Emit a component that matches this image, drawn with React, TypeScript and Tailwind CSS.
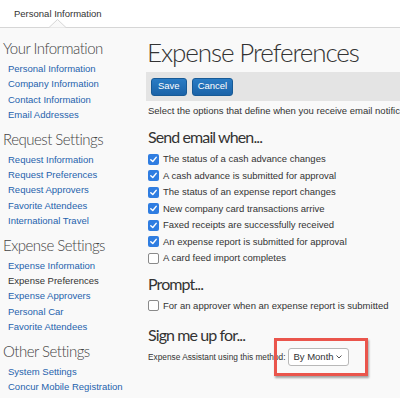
import React from 'react';

const sections: { title: string; links: { label: string; active?: boolean }[] }[] = [
  {
    title: 'Your Information',
    links: [
      { label: 'Personal Information' },
      { label: 'Company Information' },
      { label: 'Contact Information' },
      { label: 'Email Addresses' },
    ],
  },
  {
    title: 'Request Settings',
    links: [
      { label: 'Request Information' },
      { label: 'Request Preferences' },
      { label: 'Request Approvers' },
      { label: 'Favorite Attendees' },
      { label: 'International Travel' },
    ],
  },
  {
    title: 'Expense Settings',
    links: [
      { label: 'Expense Information' },
      { label: 'Expense Preferences', active: true },
      { label: 'Expense Approvers' },
      { label: 'Personal Car' },
      { label: 'Favorite Attendees' },
    ],
  },
  {
    title: 'Other Settings',
    links: [{ label: 'System Settings' }, { label: 'Concur Mobile Registration' }],
  },
];

const emailOptions: { label: string; checked: boolean }[] = [
  { label: 'The status of a cash advance changes', checked: true },
  { label: 'A cash advance is submitted for approval', checked: true },
  { label: 'The status of an expense report changes', checked: true },
  { label: 'New company card transactions arrive', checked: true },
  { label: 'Faxed receipts are successfully received', checked: true },
  { label: 'An expense report is submitted for approval', checked: true },
  { label: 'A card feed import completes', checked: false },
];

const headFont = { fontFamily: '"Lato", "Liberation Sans", sans-serif' };

const Check = ({ checked }: { checked: boolean }) =>
  checked ? (
    <span className="flex h-[11px] w-[11px] shrink-0 items-center justify-center rounded-[2px] bg-[#2f7de1]">
      <svg viewBox="0 0 10 10" className="h-[9px] w-[9px]">
        <path d="M2 5.2 L4.2 7.3 L8 2.6" fill="none" stroke="white" strokeWidth="1.6" strokeLinecap="round" strokeLinejoin="round" />
      </svg>
    </span>
  ) : (
    <span className="h-[11px] w-[11px] shrink-0 rounded-[2px] border border-[#8a8a8a] bg-white" />
  );

const Heading = ({ children }: { children: React.ReactNode }) => (
  <h2 className="text-[16px] leading-[18px] font-normal tracking-[-0.9px] text-[#333]" style={headFont}>
    {children}
  </h2>
);

export default function App() {
  return (
    <div className="h-[398px] w-[400px] overflow-hidden bg-[#f9f9f9] text-[#333]" style={{ fontFamily: '"Liberation Sans", Arial, sans-serif' }}>
      {/* Tab bar */}
      <div className="relative h-[28px] border-b border-[#d6d6d6] bg-white">
        <span className="absolute left-[14px] top-[7px] text-[9.5px] text-[#333]">Personal Information</span>
        <svg className="absolute left-[49px] top-[19px]" width="17" height="9" viewBox="0 0 17 9">
          <path d="M0 8.5 L8.5 0.5 L17 8.5" fill="#f9f9f9" stroke="#d6d6d6" strokeWidth="1" />
        </svg>
      </div>

      <div className="flex">
        {/* Sidebar */}
        <div className="w-[146px] shrink-0 pl-[3px] pt-[11px]">
          {sections.map((s) => (
            <div key={s.title} className="mb-[7px]">
              <div className="mb-[4px] text-[15px] leading-[18px] font-light tracking-[-0.5px] text-[#444]" style={headFont}>
                {s.title}
              </div>
              <div className="flex flex-col pl-[5px]">
                {s.links.map((l) => (
                  <span key={l.label} className={`whitespace-nowrap text-[9.5px] leading-[15.4px] ${l.active ? 'text-[#333]' : 'text-[#1f63ad]'}`}>
                    {l.label}
                  </span>
                ))}
              </div>
            </div>
          ))}
        </div>

        {/* Main */}
        <div className="flex-1 pt-[9px]">
          <h1 className="pl-[1px] text-[26px] leading-[30px] font-light tracking-[-1.1px] text-[#333]" style={headFont}>
            Expense Preferences
          </h1>
          <div className="mt-[5px] flex h-[29px] items-center gap-[5px] bg-[#e4e4e4] pl-[5px]">
            <button className="h-[18px] rounded-[3px] border border-[#175a96] bg-gradient-to-b from-[#2a7cc4] to-[#1b63a8] px-[6px] text-[9.5px] text-white">
              Save
            </button>
            <button className="h-[18px] rounded-[3px] border border-[#175a96] bg-gradient-to-b from-[#2a7cc4] to-[#1b63a8] px-[5px] text-[9.5px] text-white">
              Cancel
            </button>
          </div>
          <div className="pl-[2px]">
            <p className="mt-[3px] whitespace-nowrap text-[9.5px] leading-[14px]">Select the options that define when you receive email notifications.</p>

            <div className="mt-[10px]">
              <Heading>Send email when...</Heading>
              <div className="mt-[5px] flex flex-col">
                {emailOptions.map((o) => (
                  <div key={o.label} className="flex h-[16.5px] items-center gap-[4px]">
                    <Check checked={o.checked} />
                    <span className="text-[9.5px] text-[#333]">{o.label}</span>
                  </div>
                ))}
              </div>
            </div>

            <div className="mt-[8px]">
              <Heading>Prompt...</Heading>
              <div className="mt-[5px] flex h-[16.5px] items-center gap-[4px]">
                <Check checked={false} />
                <span className="text-[9.5px] text-[#333]">For an approver when an expense report is submitted</span>
              </div>
            </div>

            <div className="mt-[12px]">
              <Heading>Sign me up for...</Heading>
              <div className="relative mt-[2px] flex h-[22px] items-center">
                <span className="text-[8.3px] text-[#333]">Expense Assistant using this method:</span>
                <span className="ml-[3px] flex h-[18px] w-[61px] items-center justify-between rounded-[3px] border border-[#b8b8b8] bg-white pl-[4px] pr-[6px] text-[9.5px]">
                  By Month
                  <svg width="6" height="4" viewBox="0 0 6 4">
                    <path d="M0.5 0.5 L3 3 L5.5 0.5" fill="none" stroke="#555" strokeWidth="1" />
                  </svg>
                </span>
                <span className="absolute left-[126px] top-[-8px] h-[38px] w-[94px] border-[3px] border-[#ea554c] shadow-[1px_2px_2px_rgba(0,0,0,0.35)]" />
              </div>
            </div>
          </div>
        </div>
      </div>
    </div>
  );
}
